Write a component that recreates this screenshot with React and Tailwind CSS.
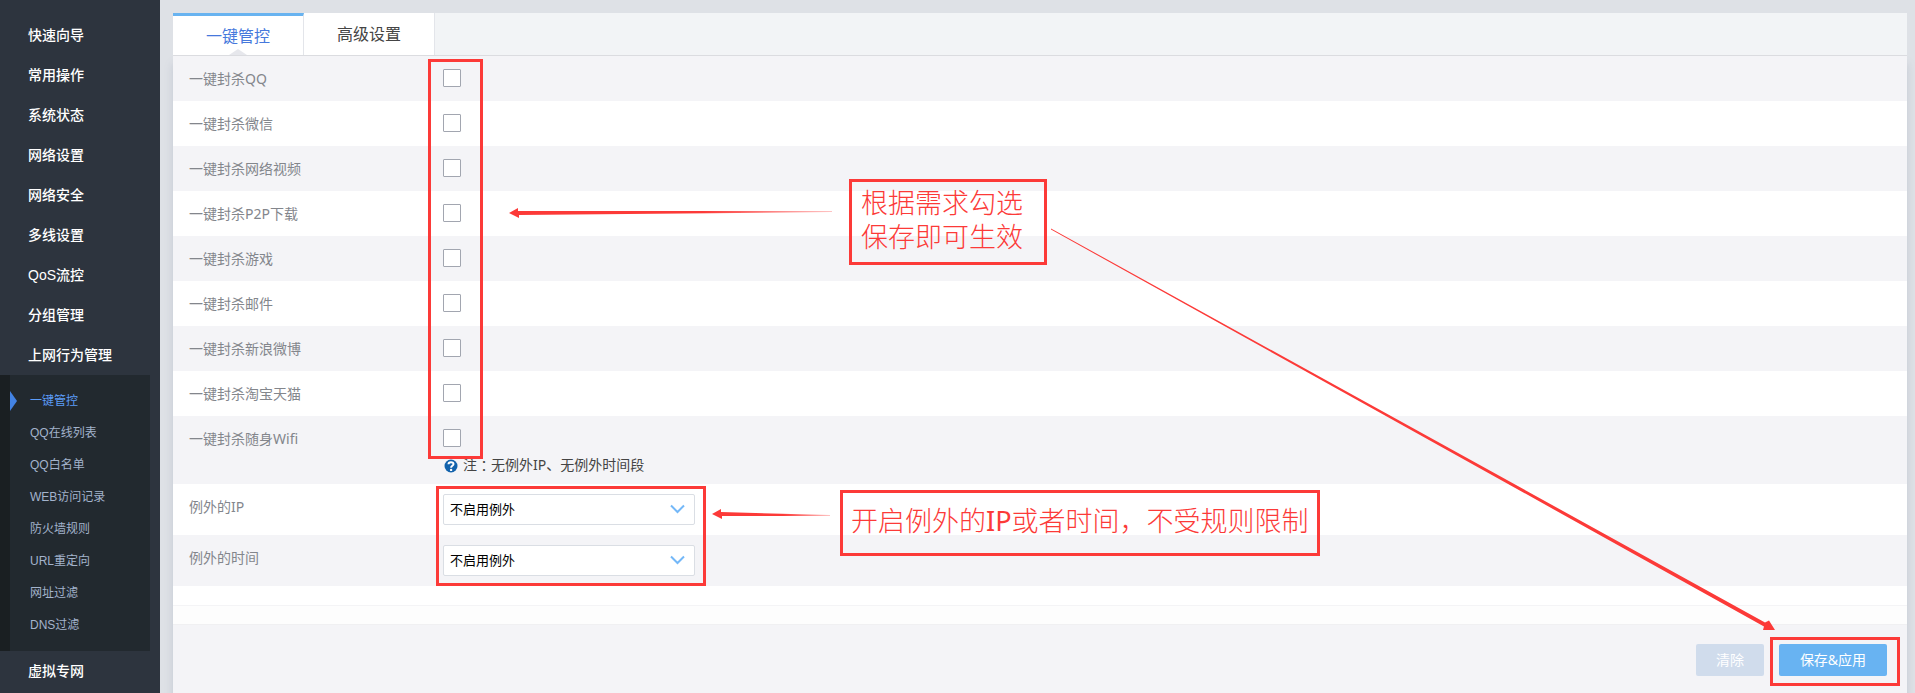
import { useState } from 'react';

const MENU = ['快速向导', '常用操作', '系统状态', '网络设置', '网络安全', '多线设置', 'QoS流控', '分组管理', '上网行为管理'];

const SUBMENU = ['一键管控', 'QQ在线列表', 'QQ白名单', 'WEB访问记录', '防火墙规则', 'URL重定向', '网址过滤', 'DNS过滤'];

const BLOCKS = [
  { id: 'qq', label: '一键封杀QQ' },
  { id: 'weixin', label: '一键封杀微信' },
  { id: 'video', label: '一键封杀网络视频' },
  { id: 'p2p', label: '一键封杀P2P下载' },
  { id: 'game', label: '一键封杀游戏' },
  { id: 'mail', label: '一键封杀邮件' },
  { id: 'weibo', label: '一键封杀新浪微博' },
  { id: 'taobao', label: '一键封杀淘宝天猫' },
  { id: 'wifi', label: '一键封杀随身Wifi', note: '无例外IP、无例外时间段' },
];

const EXCEPTIONS = [
  { id: 'ip', label: '例外的IP' },
  { id: 'time', label: '例外的时间' },
];

function Sidebar() {
  return (
    <nav className="w-40 shrink-0 bg-[#2d343e] pt-[15px] font-['Liberation_Sans','Noto_Sans_CJK_SC',sans-serif]">
      {MENU.map((item) => (
        <a key={item} href="#" className="block h-10 pl-7 text-sm leading-10 font-medium text-white">
          {item}
        </a>
      ))}
      <div className="mr-[10px] border-l-[10px] border-[#1a1f22] bg-[#22292f] py-[10px]">
        {SUBMENU.map((item, i) => (
          <a
            key={item}
            href="#"
            className={`relative block h-8 pl-5 text-xs leading-8 ${i === 0 ? 'text-[#5c9cf8]' : 'text-[#a3b3cc]'}`}
          >
            {i === 0 && (
              <svg className="absolute top-[6px] left-0 h-5 w-[7px]" viewBox="0 0 7 20">
                <path d="M0 0L7 10L0 20Z" fill="#4383e4" />
              </svg>
            )}
            {item}
          </a>
        ))}
      </div>
      <a href="#" className="block h-10 pl-7 text-sm leading-10 font-medium text-white">
        虚拟专网
      </a>
    </nav>
  );
}

function Tabs() {
  return (
    <div className="flex h-[43px] border-b border-[#dcdde1] bg-[#f2f4f6]" role="tablist">
      <button
        role="tab"
        aria-selected="true"
        className="relative w-[131px] border-t-3 border-r border-r-[#e3e5ea] border-t-[#68b3f0] bg-white text-base text-[#4678dc]"
      >
        一键管控
        <svg className="absolute bottom-0 left-[56px] h-[6px] w-[18px]" viewBox="0 0 18 6">
          <path d="M0 6L9 0L18 6Z" fill="#e6e7ec" />
        </svg>
      </button>
      <button role="tab" aria-selected="false" className="w-[131px] border-r border-[#e3e5ea] bg-white text-base text-[#444]">
        高级设置
      </button>
    </div>
  );
}

function HelpIcon() {
  return (
    <svg className="h-[14px] w-[14px]" viewBox="0 0 14 14">
      <circle cx="7" cy="7" r="6.5" fill="#1262ac" />
      <path d="M4.5 5.3C4.5 2.4 9.5 2.5 9.5 5.1C9.5 6.8 7.1 6.8 7.1 8.7" fill="none" stroke="#fff" strokeWidth="2" />
      <circle cx="7.1" cy="10.9" r="1.2" fill="#fff" />
    </svg>
  );
}

function BlockRow({ id, label, note }) {
  const [on, setOn] = useState(false);
  return (
    <div className="flex pl-4 odd:bg-[#f4f4f7]">
      <label htmlFor={id} className="h-[45px] w-[254px] shrink-0 text-sm leading-[45px] text-[#83868c]">
        {label}
      </label>
      <div className="pt-[13px]">
        <input
          id={id}
          type="checkbox"
          checked={on}
          onChange={(e) => setOn(e.target.checked)}
          className="block h-[18px] w-[18px] appearance-none rounded-[1px] border border-[#a2a6b0] bg-white checked:bg-[#68b3f0]"
        />
        {note && (
          <p className="mt-2 flex h-[29px] items-start pl-px text-sm leading-5 text-[#444]">
            <span className="pt-1 pr-[5px]">
              <HelpIcon />
            </span>
            注<span className="font-['Noto_Sans_CJK_TC',sans-serif]">：</span>
            {note}
          </p>
        )}
      </div>
    </div>
  );
}

function ExceptionRow({ id, label }) {
  return (
    <div className="flex h-[51px] pl-4 even:bg-[#f4f4f7]">
      <label htmlFor={id} className="w-[254px] shrink-0 text-sm leading-[45px] text-[#83868c]">
        {label}
      </label>
      <div className="relative mt-[10px] h-[31px] w-[252px]">
        <select
          id={id}
          className="h-full w-full appearance-none rounded-xs border border-[#dadee4] bg-white pl-[6px] text-[13px] text-black"
        >
          <option>不启用例外</option>
        </select>
        <svg className="pointer-events-none absolute top-[10px] right-[10px] h-[10px] w-[15px]" viewBox="0 0 15 10">
          <path d="M1 1.5L7.5 8L14 1.5" fill="none" stroke="#74b8f8" strokeWidth="2" />
        </svg>
      </div>
    </div>
  );
}

// red guide marks drawn over the form
function Guide() {
  return (
    <div className="pointer-events-none absolute inset-0 font-['Noto_Sans','Noto_Sans_CJK_SC',sans-serif] text-[27px] font-light text-[#fc3a38]">
      <div className="absolute top-[46px] left-[255px] h-[400px] w-[55px] border-3" />
      <div className="absolute top-[473px] left-[263px] h-[100px] w-[270px] border-3" />
      <p className="absolute top-[166px] left-[676px] h-[86px] w-[198px] border-3 pt-1 pl-[9px] leading-[34px]">
        根据需求勾选
        <br />
        保存即可生效
      </p>
      <p className="absolute top-[477px] left-[667px] h-[66px] w-[480px] border-3 pl-2 leading-[56px]">
        开启例外的<span className="font-normal">IP</span>或者时间，不受规则限制
      </p>
      <svg className="absolute top-[195px] left-[336px] h-[10px] w-[323px]" viewBox="0 0 323 10">
        <defs>
          <linearGradient id="fade">
            <stop offset="0.6" stopColor="#fc3a38" />
            <stop offset="1" stopColor="#fc3a38" stopOpacity="0.3" />
          </linearGradient>
        </defs>
        <path d="M0 5L9 0V3L323 3V4L10 7V10Z" fill="url(#fade)" />
      </svg>
      <svg className="absolute top-[496px] left-[539px] h-[10px] w-[118px]" viewBox="0 0 118 10">
        <path d="M0 5L9 0V3L118 6V7L10 7V10Z" fill="url(#fade)" />
      </svg>
      <svg className="absolute top-[215px] left-[878px] h-[402px] w-[724px]" viewBox="0 0 724 402">
        <path d="M0 0.5L714 394.5L718 392.5L724 402H712L713 398.5L0 1.5Z" fill="#fc3a38" />
      </svg>
    </div>
  );
}

export default function App() {
  return (
    <div className="flex min-h-screen overflow-hidden bg-[#dee1e6] font-['Noto_Sans','Noto_Sans_CJK_SC',sans-serif]">
      <Sidebar />
      <main className="relative mt-[13px] mr-2 ml-[13px] flex flex-1 flex-col">
        <Tabs />
        <form className="flex flex-1 flex-col bg-white shadow-[0_8px_8px_rgba(120,130,160,0.25)]" onSubmit={(e) => e.preventDefault()}>
          <div>
            {BLOCKS.map((row) => (
              <BlockRow key={row.id} {...row} />
            ))}
          </div>
          <div>
            {EXCEPTIONS.map((row) => (
              <ExceptionRow key={row.id} {...row} />
            ))}
          </div>
          <div className="h-[19px]" />
          <div className="h-[19px] border-t border-[#f4f4f6] bg-[#fdfdfd]" />
          <div className="flex flex-1 items-start justify-end gap-[6px] border-t border-[#f0f0f2] bg-[#f4f4f7] pt-3 pr-[7px]">
            <button type="button" className="mt-[7px] h-8 w-[68px] rounded-xs bg-[#d0dcec] text-sm text-white">
              清除
            </button>
            <div className="border-3 border-[#fc3a38] pt-1 pr-[10px] pb-[7px] pl-[6px]">
              <button type="submit" className="block h-8 w-[108px] rounded-xs bg-[#68b3f2] text-sm text-white">
                保存&应用
              </button>
            </div>
          </div>
        </form>
        <Guide />
      </main>
    </div>
  );
}
